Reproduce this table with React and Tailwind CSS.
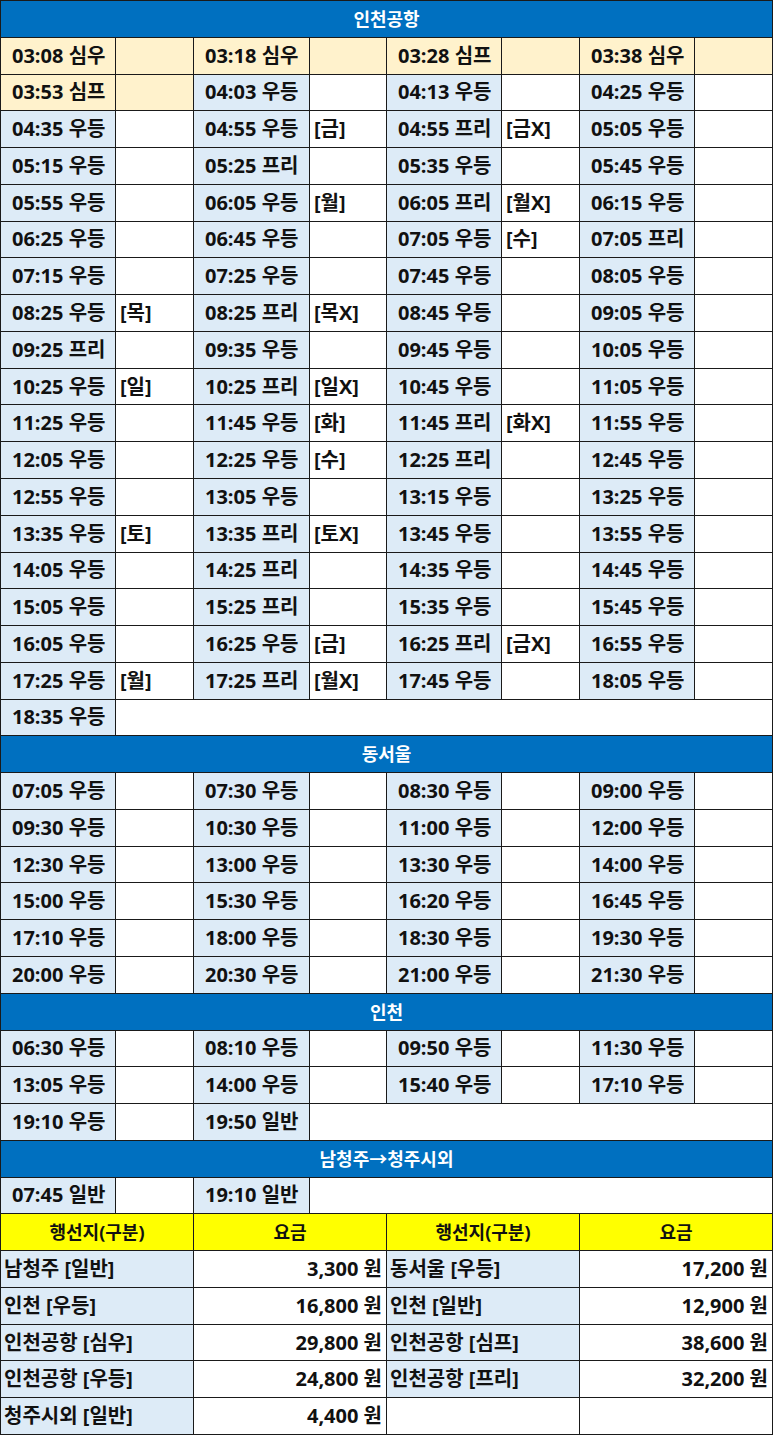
import React from "react";

const airport = [
  [["03:08 심우", ""], ["03:18 심우", ""], ["03:28 심프", ""], ["03:38 심우", ""]],
  [["03:53 심프", ""], ["04:03 우등", ""], ["04:13 우등", ""], ["04:25 우등", ""]],
  [["04:35 우등", ""], ["04:55 우등", "[금]"], ["04:55 프리", "[금X]"], ["05:05 우등", ""]],
  [["05:15 우등", ""], ["05:25 프리", ""], ["05:35 우등", ""], ["05:45 우등", ""]],
  [["05:55 우등", ""], ["06:05 우등", "[월]"], ["06:05 프리", "[월X]"], ["06:15 우등", ""]],
  [["06:25 우등", ""], ["06:45 우등", ""], ["07:05 우등", "[수]"], ["07:05 프리", ""]],
  [["07:15 우등", ""], ["07:25 우등", ""], ["07:45 우등", ""], ["08:05 우등", ""]],
  [["08:25 우등", "[목]"], ["08:25 프리", "[목X]"], ["08:45 우등", ""], ["09:05 우등", ""]],
  [["09:25 프리", ""], ["09:35 우등", ""], ["09:45 우등", ""], ["10:05 우등", ""]],
  [["10:25 우등", "[일]"], ["10:25 프리", "[일X]"], ["10:45 우등", ""], ["11:05 우등", ""]],
  [["11:25 우등", ""], ["11:45 우등", "[화]"], ["11:45 프리", "[화X]"], ["11:55 우등", ""]],
  [["12:05 우등", ""], ["12:25 우등", "[수]"], ["12:25 프리", ""], ["12:45 우등", ""]],
  [["12:55 우등", ""], ["13:05 우등", ""], ["13:15 우등", ""], ["13:25 우등", ""]],
  [["13:35 우등", "[토]"], ["13:35 프리", "[토X]"], ["13:45 우등", ""], ["13:55 우등", ""]],
  [["14:05 우등", ""], ["14:25 프리", ""], ["14:35 우등", ""], ["14:45 우등", ""]],
  [["15:05 우등", ""], ["15:25 프리", ""], ["15:35 우등", ""], ["15:45 우등", ""]],
  [["16:05 우등", ""], ["16:25 우등", "[금]"], ["16:25 프리", "[금X]"], ["16:55 우등", ""]],
  [["17:25 우등", "[월]"], ["17:25 프리", "[월X]"], ["17:45 우등", ""], ["18:05 우등", ""]],
];

const dongSeoul = [
  ["07:05", "07:30", "08:30", "09:00"],
  ["09:30", "10:30", "11:00", "12:00"],
  ["12:30", "13:00", "13:30", "14:00"],
  ["15:00", "15:30", "16:20", "16:45"],
  ["17:10", "18:00", "18:30", "19:30"],
  ["20:00", "20:30", "21:00", "21:30"],
];

const incheon = [
  ["06:30", "08:10", "09:50", "11:30"],
  ["13:05", "14:00", "15:40", "17:10"],
];

const fares = [
  ["남청주 [일반]", "3,300 원", "동서울 [우등]", "17,200 원"],
  ["인천 [우등]", "16,800 원", "인천 [일반]", "12,900 원"],
  ["인천공항 [심우]", "29,800 원", "인천공항 [심프]", "38,600 원"],
  ["인천공항 [우등]", "24,800 원", "인천공항 [프리]", "32,200 원"],
  ["청주시외 [일반]", "4,400 원", "", ""],
];

const Time = ({ children, peach }) => (
  <div className={`flex items-center pl-[11px] whitespace-nowrap ${peach ? "bg-[#fff2cc]" : "bg-[#ddebf7]"}`}>{children}</div>
);

const Note = ({ children, peach }) => (
  <div className={`flex items-center pl-1 whitespace-nowrap ${peach ? "bg-[#fff2cc]" : "bg-white"}`}>{children}</div>
);

const Header = ({ children }) => (
  <div className="col-span-8 flex items-center justify-center bg-[#0070c0] text-white text-[18px]">{children}</div>
);

export default function App() {
  return (
    <div className="w-[773px] h-[1435px] bg-white">
      <div className="grid h-[1435px] grid-cols-[114px_77px_115px_76px_114px_77px_114px_77px] grid-rows-[repeat(39,minmax(0,1fr))] gap-px bg-[#1a1a1a] border border-[#1a1a1a] font-['Open_Sans','Noto_Sans_CJK_KR',sans-serif] text-[20px] leading-none font-bold text-[#111]">
        <Header>인천공항</Header>
        {airport.map((row, r) =>
          row.map(([t, n], c) => {
            const peach = r === 0 || (r === 1 && c === 0);
            return (
              <React.Fragment key={`a${r}-${c}`}>
                <Time peach={peach}>{t}</Time>
                <Note peach={peach}>{n}</Note>
              </React.Fragment>
            );
          })
        )}
        <Time>18:35 우등</Time>
        <div className="col-span-7 bg-white" />

        <Header>동서울</Header>
        {dongSeoul.map((row, r) =>
          row.map((t, c) => (
            <React.Fragment key={`d${r}-${c}`}>
              <Time>{t} 우등</Time>
              <Note />
            </React.Fragment>
          ))
        )}

        <Header>인천</Header>
        {incheon.map((row, r) =>
          row.map((t, c) => (
            <React.Fragment key={`i${r}-${c}`}>
              <Time>{t} 우등</Time>
              <Note />
            </React.Fragment>
          ))
        )}
        <Time>19:10 우등</Time>
        <Note />
        <Time>19:50 일반</Time>
        <div className="col-span-5 bg-white" />

        <Header>남청주→청주시외</Header>
        <Time>07:45 일반</Time>
        <Note />
        <Time>19:10 일반</Time>
        <div className="col-span-5 bg-white" />

        {["행선지(구분)", "요금", "행선지(구분)", "요금"].map((h, i) => (
          <div key={`h${i}`} className="col-span-2 flex items-center justify-center bg-[#ffff00] text-[18px]">{h}</div>
        ))}
        {fares.map((row, r) =>
          row.map((v, c) =>
            c % 2 === 0 ? (
              <div key={`f${r}-${c}`} className={`col-span-2 flex items-center pl-[3px] whitespace-nowrap ${v ? "bg-[#ddebf7]" : "bg-white"}`}>{v}</div>
            ) : (
              <div key={`f${r}-${c}`} className="col-span-2 flex items-center justify-end pr-1 whitespace-nowrap bg-white">{v}</div>
            )
          )
        )}
      </div>
    </div>
  );
}
